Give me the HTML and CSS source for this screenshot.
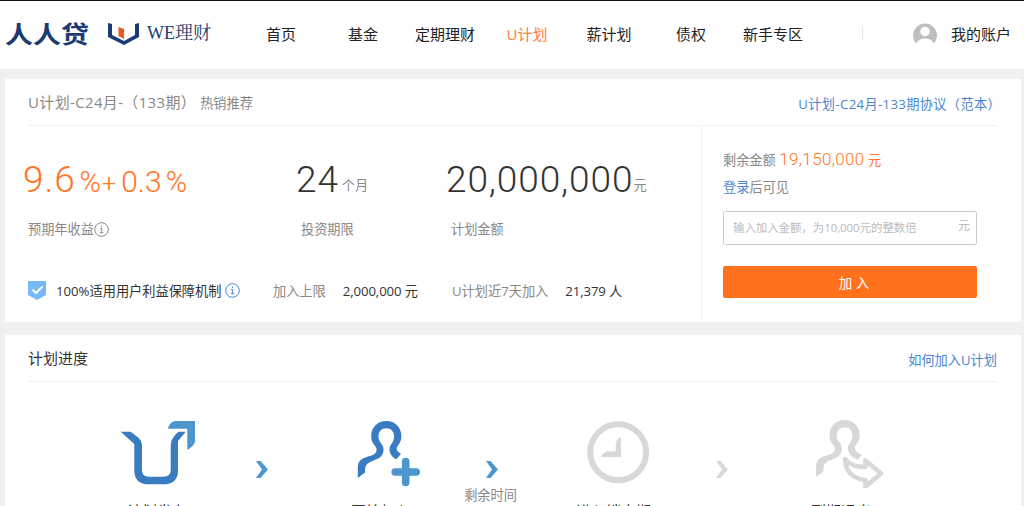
FILE: index.html
```html
<!DOCTYPE html>
<html lang="zh-CN">

<head>
    <meta charset="UTF-8">
    <meta name="viewport" content="width=device-width, initial-scale=1.0">
    <title>U计划</title>
    <link rel="stylesheet" href="styles.css">
</head>

<body>
    <header class="header">
        <div class="logo">
            <svg class="logo-name" width="86" height="30" viewBox="0 0 86 30">
                <text x="0" y="24" textLength="84" lengthAdjust="spacingAndGlyphs">人人贷</text>
            </svg>
            <svg class="logo-mark" width="32" height="24" viewBox="0 0 32 24">
                <path d="M0 1l4 1v11l12 6 11-6V2l4-1v14l-15 8L0 15z" fill="#1c3b72" />
                <path d="M10.500 5l5.500 2v10l-5.500-3z" fill="#e9571f" />
            </svg>
            <svg class="logo-sub" width="66" height="26" viewBox="0 0 66 26">
                <text x="0" y="18" textLength="64" lengthAdjust="spacingAndGlyphs">WE理财</text>
            </svg>
        </div>
        <nav class="nav">
            <a>首页</a>
            <a>基金</a>
            <a>定期理财</a>
            <a class="active">U计划</a>
            <a>薪计划</a>
            <a>债权</a>
            <a>新手专区</a>
        </nav>
        <div class="account">
            <svg width="24" height="22" viewBox="0 0 24 22">
                <path d="M3 21.500A12 12 0 1 1 21 21.500Q18 16.500 12 16.500T3 21.500z" fill="#bfbfbf" />
                <circle cx="12" cy="9.500" r="4.700" fill="#fff" />
            </svg>
            <span>我的账户</span>
        </div>
    </header>

    <section class="card plan">
        <div class="card-head">
            <h1>U计划-C24月-（133期）<small>热销推荐</small></h1>
            <a class="link">U计划-C24月-133期协议（范本）</a>
        </div>
        <div class="plan-body">
            <div class="plan-info">
                <div class="stats">
                    <div class="stat rate">
                        <p class="num"><b>9.6</b><i class="percent">%</i><i class="plus">+</i><i class="extra">0.3</i><i class="percent">%</i></p>
                        <p class="label">预期年收益<svg class="tip" width="15" height="15" viewBox="0 0 15 15">
                                <circle cx="7.500" cy="7.500" r="6.800" />
                                <path d="M6 6.500h1.700v4M5.800 10.700h3.600M7.500 3.700v1.400" />
                            </svg></p>
                    </div>
                    <div class="stat term">
                        <p class="num"><b>24</b><em>个月</em></p>
                        <p class="label">投资期限</p>
                    </div>
                    <div class="stat amount">
                        <p class="num"><b>20,000,000</b><em>元</em></p>
                        <p class="label">计划金额</p>
                    </div>
                </div>
                <div class="facts">
                    <div class="safe">
                        <svg width="18" height="19" viewBox="0 0 18 19">
                            <path d="M1 0h16q1 0 1 1v12q0 1-1 1.600L9 19l-8-4.400Q0 14 0 13V1q0-1 1-1z" fill="#76b9fa" />
                            <path d="M4.500 8.500l3.500 3.500 6.500-6.500" fill="none" stroke="#fff" stroke-width="2" />
                        </svg>
                        <span>100%适用用户利益保障机制</span>
                        <svg class="tip blue" width="15" height="15" viewBox="0 0 15 15">
                            <circle cx="7.500" cy="7.500" r="6.800" />
                            <path d="M6 6.500h1.700v4M5.800 10.700h3.600M7.500 3.700v1.400" />
                        </svg>
                    </div>
                    <div class="fact limit"><span>加入上限</span><strong>2,000,000 元</strong></div>
                    <div class="fact joined"><span>U计划近7天加入</span><strong>21,379 人</strong></div>
                </div>
            </div>
            <div class="buy">
                <p class="remain">剩余金额 <b>19,150,000</b> <em>元</em></p>
                <p class="login"><a class="link">登录</a>后可见</p>
                <div class="field">
                    <span>输入加入金额，为10,000元的整数倍</span>
                    <span class="unit">元</span>
                </div>
                <button type="button">加 入</button>
            </div>
        </div>
    </section>

    <section class="card progress">
        <div class="card-head">
            <h2>计划进度</h2>
            <a class="link">如何加入U计划</a>
        </div>
        <div class="steps">
            <div class="step">
                <div class="step-main">
                    <svg width="80" height="70" viewBox="0 0 80 70">
                        <path d="M2.700 13.700h10l8.300 6.600q3 2.700 3 6.700v25q0 6.700 6.700 6.700h14.600q7.400 0 7.400-6.700V27q0-4 2.300-7 3.500-5.500 6-6.300h6.700L60 23v30.700q-1 12-13 12.600H29.300q-12-.600-13-12.600V26z" fill="#3a7cc2" />
                        <path d="M50 10.700q1-6 7-7.700h20v20.700q-1 4-7.700 8.300V10.700z" fill="#4b97cd" />
                    </svg>
                    <p>U计划发布</p>
                </div>
                <div class="next"><svg width="13" height="17" viewBox="0 0 13 17"><path d="M0 0h4.500L12 8.500 4.500 17H0l6-8.500z" /></svg></div>
            </div>
            <div class="step">
                <div class="step-main">
                    <svg width="80" height="70" viewBox="0 0 80 70">
                        <path d="M9.800 60V50C9.800 35 28.600 41.500 28.600 31.600C28.600 28 23.200 26 23.200 18.500C23.200 9 29.500 3 38.300 3S53.400 9 53.400 18.500C53.400 25 48.700 27.500 48.700 31C48.700 33 50.500 34.300 53 36L48 41.500C44.500 39 41.500 36 41.500 31.500C41.500 26 46.100 25 46.100 18.500C46.100 13.500 43 10.300 38.300 10.300S30.500 13.500 30.500 18.500C30.500 25 35.500 25.500 35.500 31.500C35.500 38 32 40 25.500 42.500C18.500 45.500 17 46.500 17 54.500z" fill="#3a7cc2" />
                        <path d="M57.700 43.500v21M47.200 54h21" stroke="#4b97cd" stroke-width="7.600" stroke-linecap="round" />
                    </svg>
                    <p>开始加入</p>
                </div>
                <div class="next"><svg width="13" height="17" viewBox="0 0 13 17"><path d="M0 0h4.500L12 8.500 4.500 17H0l6-8.500z" /></svg><span>剩余时间</span></div>
            </div>
            <div class="step">
                <div class="step-main">
                    <svg width="80" height="70" viewBox="0 0 80 70">
                        <circle cx="40.200" cy="34.300" r="28" fill="none" stroke="#d8d8d8" stroke-width="6" />
                        <path d="M43 19.300V39H23.300q2-5.500 7-5.500h7.400V27q0-6 5.300-7.700z" fill="#d8d8d8" />
                    </svg>
                    <p>进入锁定期</p>
                </div>
                <div class="next off"><svg width="13" height="17" viewBox="0 0 13 17"><path d="M0 0h4.500L12 8.500 4.500 17H0l6-8.500z" /></svg></div>
            </div>
            <div class="step">
                <div class="step-main">
                    <svg width="80" height="70" viewBox="0 0 80 70">
                        <path transform="translate(-1.700 -1)" d="M9.800 60V50C9.800 35 28.600 41.500 28.600 31.600C28.600 28 23.200 26 23.200 18.500C23.200 9 29.500 3 38.300 3S53.400 9 53.400 18.500C53.400 25 48.700 27.500 48.700 31C48.700 33 50.500 36 55.500 37.500L51.500 43C46 41 41.500 36 41.500 31.500C41.500 26 46.100 25 46.100 18.500C46.100 13.500 43 10.300 38.300 10.300S30.500 13.500 30.500 18.500C30.500 25 35.500 25.500 35.500 31.500C35.500 38 32 40 25.500 42.500C18.500 45.500 17 46.500 17 54.500z" fill="#d8d8d8" />
                        <path d="M37 41Q42.500 49 57.500 49V42.500L73 55.500 57.500 68.500V62Q38 60 37 41z" fill="none" stroke="#d8d8d8" stroke-width="4.600" stroke-linejoin="round" />
                    </svg>
                    <p>到期退出</p>
                </div>
            </div>
        </div>
    </section>
</body>

</html>
```
FILE: styles.css
```css
* {
    box-sizing: border-box;
}

body {
    margin: 0;
    height: 506px;
    overflow: hidden;
    background: #f0f0f0;
    color: #333;
    font-family: "Open Sans", "Noto Sans CJK SC", sans-serif;
    font-size: 13.2px;
    line-height: 20px;
}

h1,
h2,
p {
    margin: 0;
    font-weight: normal;
}

i,
em {
    font-style: normal;
}

svg {
    display: block;
    flex-shrink: 0;
}

.link {
    color: #4a86d0;
}

/* header */
.header {
    display: flex;
    align-items: center;
    height: 69px;
    padding: 0 13px 2px 5px;
    border-top: 1px solid #111;
    background: #fff;
}

.logo {
    display: flex;
    align-items: center;
    width: 235px;
}

.logo text {
    fill: #1c3b72;
}

.logo-name text {
    font-family: "Noto Sans CJK SC", sans-serif;
    font-size: 24px;
    font-weight: 700;
}

.logo-mark {
    margin-left: 17px;
}

.logo-sub {
    margin-left: 7px;
}

.logo-sub text {
    font-family: "Liberation Serif", "Noto Serif CJK SC", "Noto Sans CJK SC", serif;
    font-size: 18px;
}

.nav {
    display: flex;
    font-size: 15px;
    color: #222;
}

.nav a {
    width: 82px;
    text-align: center;
}

.nav .active {
    color: #ff7d41;
}

.account {
    display: flex;
    align-items: center;
    margin-left: auto;
    padding-left: 51px;
    background: linear-gradient(#e5e5e5, #e5e5e5) 0 50% / 1px 14px no-repeat;
    color: #222;
    font-size: 15px;
}

.account svg {
    margin-top: -3px;
}

.account span {
    margin-left: 14px;
}

/* cards */
.card {
    width: 1016px;
    margin-left: 5px;
    padding: 0 24px 0 23px;
    background: #fff;
}

.card-head {
    display: flex;
    align-items: center;
    justify-content: space-between;
    height: 47px;
    border-bottom: 1px solid #f0f0f0;
}

.plan {
    height: 243px;
    margin-top: 10px;
}

.plan .card-head .link {
    margin-right: -4px;
    padding-top: 3px;
    letter-spacing: 0.35px;
}

h1 {
    color: #888;
    font-size: 15px;
    letter-spacing: 0.35px;
}

h1 small {
    margin-left: 4px;
    font-size: 13.2px;
    letter-spacing: 0;
}

.plan-body {
    display: flex;
    height: 196px;
}

.plan-info {
    width: 673px;
}

.stats {
    display: flex;
    height: 143px;
    padding-top: 30px;
}

.stat .num {
    height: 48px;
    font-family: Roboto, "Noto Sans CJK SC", sans-serif;
    line-height: 48px;
    white-space: nowrap;
}

.stat b {
    font-size: 37px;
    font-weight: 300;
    letter-spacing: 0.9px;
}

.stat em {
    position: relative;
    top: -2px;
    color: #888;
    font-size: 13.2px;
}

.stat .label {
    display: flex;
    align-items: center;
    margin-top: 15px;
    color: #888;
}

.rate {
    width: 273px;
}

.rate .num {
    margin-left: -5px;
    color: #ff7426;
}

.rate i {
    font-size: 29px;
    font-weight: 300;
}

.rate .percent {
    margin-left: 4px;
}

.rate .plus {
    margin-left: 1px;
    font-size: 25px;
}

.rate .extra {
    margin-left: 5px;
    font-size: 30px;
}

.term {
    width: 150px;
}

.term .num,
.amount .num {
    margin-left: -5px;
}

.term em {
    margin-left: 3px;
}

.tip {
    fill: none;
    stroke: #888;
    stroke-width: 1;
}

.tip.blue {
    margin-left: 4px;
    stroke: #4a86d0;
}

.facts {
    display: flex;
    align-items: center;
    height: 44px;
}

.safe {
    display: flex;
    align-items: center;
    width: 245px;
}

.safe span {
    margin-left: 10px;
}

.safe > svg {
    position: relative;
    top: -1px;
}

.fact span {
    color: #888;
}

.fact strong {
    margin-left: 17px;
    font-weight: normal;
    letter-spacing: -0.1px;
}

.limit {
    width: 179px;
}

/* purchase box */
.buy {
    width: 276px;
    padding: 23px 0 0 21px;
    border-left: 1px solid #f0f0f0;
    color: #888;
}

.remain b {
    font-family: Roboto, sans-serif;
    font-size: 17px;
    font-weight: 300;
    letter-spacing: 0.35px;
}

.remain b,
.remain em {
    color: #ff7426;
}

.login {
    margin-top: 7px;
}

.field {
    display: flex;
    align-items: center;
    justify-content: space-between;
    height: 34px;
    margin-top: 14px;
    padding: 0 6px 0 9px;
    border: 1px solid #ccc;
    border-radius: 2px;
    color: #bbb;
    font-size: 11.4px;
}

.field .unit {
    padding-bottom: 5px;
    font-size: 12px;
}

.buy button {
    display: block;
    width: 254px;
    height: 32px;
    margin-top: 21px;
    padding: 0 0 0 8px;
    border: none;
    border-radius: 2px;
    background: #ff711c;
    color: #fff;
    font-family: inherit;
    font-size: 13.5px;
}

/* progress */
.progress {
    height: 200px;
    margin-top: 13px;
}

h2 {
    font-size: 15px;
}

.progress .card-head .link {
    padding-top: 3px;
}

.steps {
    display: flex;
    padding: 36px 0 0 90px;
}

.step {
    display: flex;
    flex-shrink: 0;
    width: 230px;
}

.step-main {
    width: 80px;
}

.step-main p {
    margin: 13px 12px 0 -2px;
    font-size: 15px;
    text-align: center;
    white-space: nowrap;
}

.next {
    width: 60px;
    margin-left: 34px;
    padding-top: 43px;
    color: #888;
    text-align: center;
}

.next svg {
    margin: 0 auto;
    fill: #4b97cd;
}

.next span {
    display: block;
    margin: 7px 3px 0 0;
}

.next.off svg {
    fill: #d8d8d8;
}
```
